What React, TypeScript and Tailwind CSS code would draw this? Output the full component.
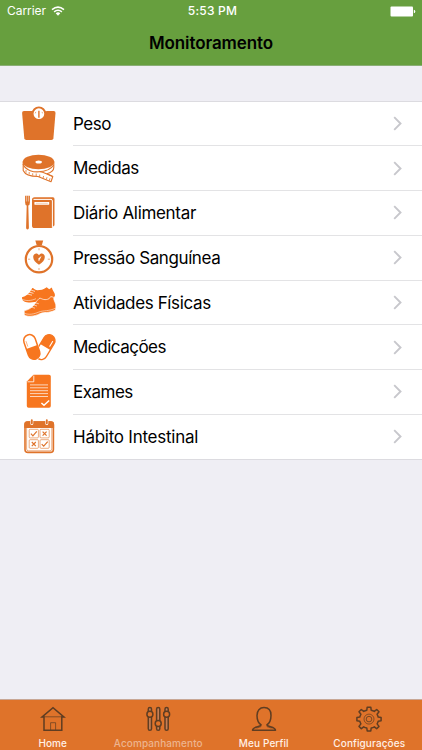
import React from "react";

const ORANGE = "#df732a";
const BRIGHT = "#f7761f";

interface IMenuItem {
    name: string;
    tracking: string;
    icon: React.ReactNode;
}

const ScaleIcon = () => (
    <svg width="36" height="36" viewBox="0 0 36 36">
        <path d="M3 5.1H32.7Q34.6 5.1 34.5 7L32.4 32.3Q32.2 34.1 30.4 34.1H5.3Q3.5 34.1 3.3 32.3L1.1 7Q1 5.1 3 5.1Z" fill={ORANGE} />
        <path d="M10.3 4.8V3.3H25.5V5.3Z" fill="white" />
        <circle cx="17.9" cy="7.7" r="6.3" fill="white" stroke={ORANGE} strokeWidth="1.9" />
        <path d="M17.9 4.7V11.7" stroke={ORANGE} strokeWidth="1.4" />
        <path d="M14.2 7.4L14.8 5.9M21.6 7.4L21 5.9" stroke={ORANGE} strokeWidth="0.6" />
    </svg>
);

const TapeIcon = () => (
    <svg width="36" height="36" viewBox="0 0 36 36">
        <path d="M2.2 10.5V19.5C4 23.5 10 25.5 17 25.5L30 30.7L31.8 25.5L26 22.8C30 21.5 32.8 19 32.8 16.5V10.5Z" fill="white" stroke={ORANGE} strokeWidth="1.1" strokeLinejoin="round" />
        <ellipse cx="17.5" cy="11" rx="15.7" ry="7.3" fill={ORANGE} />
        <path d="M2 13C5 20 13 21.2 18 20.8C22 20.4 24 22.5 31.7 25.4M17 20.8C24 20.5 30 18.5 32.7 14" fill="none" stroke={ORANGE} strokeWidth="1.1" />
        <path d="M5 21.7V19M8.2 23.3V21M11.7 24.5V22.3M15.2 25V22.5M18.7 26V23.6M22 27.2L22.6 25M25.3 28.5L26 26.2M28.3 29.7L29 27.3" stroke={ORANGE} strokeWidth="0.8" />
        <ellipse cx="17.7" cy="11" rx="3.2" ry="1.5" fill="white" />
    </svg>
);

const FoodDiaryIcon = () => (
    <svg width="36" height="36" viewBox="0 0 36 36">
        <path d="M4.1 0.7V7.5Q4.1 10 5.7 10.5L5.1 32.7Q5.1 34.5 6.5 34.5T7.9 32.7L7.3 10.5Q8.9 10 8.9 7.5V0.7" fill={ORANGE} />
        <path d="M5.6 0.3V6.5M7.4 0.3V6.5" stroke="white" strokeWidth="0.5" />
        <path d="M13.6 2.2H32Q33.5 2.2 33.5 4V30.2L30.5 33.1H13.6Q11 33.1 11 30.5V4.8Q11 2.2 13.6 2.2Z" fill={ORANGE} />
        <path d="M12.5 4.4H30Q31.4 4.4 31.4 6V32.2" fill="none" stroke="white" strokeWidth="1" />
        <rect x="13.4" y="6.9" width="14.8" height="2.8" rx="0.4" fill="white" />
        <path d="M14.8 8.3H26.8" stroke={ORANGE} strokeWidth="0.35" />
    </svg>
);

const PressureIcon = () => (
    <svg width="36" height="36" viewBox="0 0 36 36">
        <path d="M14.3 0.5H22.2L20.8 5.2H15.7Z" fill={ORANGE} />
        <circle cx="18" cy="19.2" r="13.2" fill="white" stroke={ORANGE} strokeWidth="2.2" />
        <path d="M18 8.2V10.3M18 28V30.1M7 19.2H9.2M26.8 19.2H29" stroke={ORANGE} strokeWidth="0.6" />
        <path d="M18 24.8C14.5 22.4 12.2 20.3 12.2 17C12.2 13.3 16.2 12.2 18 15.2C19.8 12.2 23.8 13.3 23.8 17C23.8 20.3 21.5 22.4 18 24.8Z" fill={ORANGE} />
        <path d="M20.6 15.8L17.4 18.6Q16.5 20.3 17.7 20.8Q18.9 20.9 19 19.3Z" fill="white" />
        <circle cx="17.9" cy="19.7" r="0.5" fill={ORANGE} />
    </svg>
);

const ShoesIcon = () => (
    <svg width="36" height="36" viewBox="0 0 36 36">
        <path d="M1 12.2C5 11.4 8.4 8.5 11 3.4C12.2 2.2 13.2 5.3 16.3 5.2C20 5.1 22 4.8 25.7 2.2L28.2 4.3L30.8 2.5C31.2 5.5 34 7.5 34 10.3L32 15L9 17.6C5 17.5 0.5 16.5 1 12.2Z" fill={BRIGHT} />
        <path d="M1 14.2C5 16.2 10 15.9 15 13.7" fill="none" stroke="white" strokeWidth="0.5" />
        <path d="M8 7L12.5 8.3M9.8 5L14 6.4M6.2 9L11 10.2" stroke="white" strokeWidth="0.7" />
        <path d="M3.2 25.6C9 24.8 13.4 20.5 15.2 16.6C17 15.3 17.4 13.5 19 13.1C21.2 13.9 24 15.8 28.2 13.6L29.7 11.6L32.6 12.2C32.3 15.5 35.6 18.4 34.9 22.4L34.5 25C28 28.5 23 26.7 19 28.7C13 31.7 6 32.2 3.2 29.8Z" fill={BRIGHT} stroke="white" strokeWidth="0.7" />
        <path d="M3.3 28.2C8 30.2 13 29.1 17.7 27.1C22 25.2 28.5 26.5 34.7 23" fill="none" stroke="white" strokeWidth="0.5" />
        <path d="M12.1 19.8L16 21M14 17.7L17.8 18.8M9.7 21.8L14 23.2" stroke="white" strokeWidth="0.6" />
    </svg>
);

const PillsIcon = () => (
    <svg width="36" height="36" viewBox="0 0 36 36">
        <g transform="rotate(31 24.2 17.1)">
            <rect x="18.3" y="3.6" width="11.8" height="27" rx="5.9" fill="white" stroke={BRIGHT} strokeWidth="1.3" />
            <path d="M18.3 17V9.5A5.9 5.9 0 0 1 30.1 9.5V17Z" fill={BRIGHT} />
            <path d="M27.7 8.5V14" stroke="white" strokeWidth="1.1" strokeLinecap="round" />
        </g>
        <g transform="rotate(-19 10.7 17)">
            <rect x="3.9" y="3.4" width="13.6" height="27.2" rx="6.8" fill="white" />
            <rect x="4.9" y="4.3" width="11.8" height="25.4" rx="5.9" fill="white" stroke={BRIGHT} strokeWidth="1.5" />
            <path d="M4.9 17H16.7V23.8A5.9 5.9 0 0 1 4.9 23.8Z" fill={BRIGHT} />
            <path d="M7.2 10V15" stroke={BRIGHT} strokeWidth="0.5" strokeLinecap="round" />
        </g>
    </svg>
);

const ExamIcon = () => (
    <svg width="36" height="36" viewBox="0 0 36 36">
        <path d="M12.5 0.8H28Q29.8 0.8 29.8 2.6V32Q29.8 33.8 28 33.8H7.6Q5.8 33.8 5.8 32V7.5Z" fill={BRIGHT} />
        <path d="M12.8 1.6V7.8H6.5" fill="none" stroke="white" strokeWidth="0.8" />
        <path d="M9 10.9H27M9 13.8H27M9 16.7H27M9 19.6H27M9 22.5H27" stroke="white" strokeWidth="0.7" />
        <path d="M20.4 29L23 31.3L28.2 26.5" fill="none" stroke="white" strokeWidth="1.5" />
    </svg>
);

const CalendarIcon = () => (
    <svg width="36" height="36" viewBox="0 0 36 36">
        <rect x="4" y="3" width="28.4" height="30.4" rx="3" fill="white" stroke={ORANGE} strokeWidth="1.6" />
        <path d="M3.3 9V5Q3.3 2.3 6 2.3H30.4Q33.1 2.3 33.1 5V9Z" fill={ORANGE} />
        <path d="M5.6 9V30Q5.6 31.8 7.4 31.8H29Q30.8 31.8 30.8 30V9" fill="none" stroke={ORANGE} strokeWidth="0.6" />
        <path d="M10.8 1.2V4.4M25.8 1.2V4.4" stroke="white" strokeWidth="3" strokeLinecap="round" />
        <path d="M10.8 1.2V4.2M25.8 1.2V4.2" stroke={ORANGE} strokeWidth="1.9" strokeLinecap="round" />
        <g fill="none" stroke={ORANGE} strokeWidth="0.6">
            <rect x="8.2" y="10.3" width="9.2" height="8.6" rx="1" />
            <rect x="19" y="10.3" width="9.2" height="8.6" rx="1" />
            <rect x="8.2" y="20.7" width="9.2" height="8.6" rx="1" />
            <rect x="19" y="20.7" width="9.2" height="8.6" rx="1" />
        </g>
        <g fill="none" stroke={ORANGE} strokeWidth="1.2">
            <path d="M9.9 14.7L11.9 16.8L15.8 12.3M20.7 25.1L22.7 27.2L26.7 22.7" />
            <path d="M21.6 12.6L25.6 16.7M25.6 12.6L21.6 16.7M10.8 23L14.8 27.1M14.8 23L10.8 27.1" />
        </g>
    </svg>
);

const HomeIcon = () => (
    <svg width="26" height="26" viewBox="0 0 26 26" fill="none" stroke="#5f3d22">
        <path d="M1.9 11.1L13 1.8L24.1 11.1H21.8V24.2H4V11.1Z" strokeWidth="1.5" />
        <path d="M4 10.8H22M10.6 24V16.7H15.6V24" strokeWidth="0.7" />
    </svg>
);

const SlidersIcon = () => (
    <svg width="26" height="26" viewBox="0 0 26 26" fill="#c77f55" stroke="#5f3d22" strokeWidth="1.5">
        <rect x="3.3" y="1.5" width="3.2" height="22.8" rx="1.6" />
        <rect x="11.6" y="1.5" width="3.2" height="22.8" rx="1.6" />
        <rect x="20" y="1.5" width="3.2" height="22.8" rx="1.6" />
        <g fill={ORANGE}>
            <circle cx="4.9" cy="8.3" r="3" />
            <circle cx="13.2" cy="17.5" r="3" />
            <circle cx="21.6" cy="8.3" r="3" />
        </g>
    </svg>
);

const ProfileIcon = () => (
    <svg width="26" height="26" viewBox="0 0 26 26" fill="none" stroke="#5f3d22" strokeWidth="1.5">
        <path d="M10.1 18.9C7.4 17 6 13.2 6 9.4C6 4.5 8.7 1.6 13 1.6S20 4.5 20 9.4C20 13.2 18.6 17 15.9 18.9C16.7 21 24.5 20.6 24.5 24.3H1.5C1.5 20.6 9.3 21 10.1 18.9Z" strokeLinejoin="round" />
        <path d="M5.5 22.2Q8.8 21.2 10.3 20.5M20.5 22.2Q17.2 21.2 15.7 20.5" strokeWidth="0.6" />
    </svg>
);

const GearIcon = () => (
    <svg width="26" height="26" viewBox="0 0 26 26" fill="none" stroke="#5f3d22">
        <path
            d="M11.2 1.2H14.8L15.2 4.2Q17 4.6 18.3 5.4L20.7 3.5L23 5.8L21.1 8.3Q21.9 9.6 22.2 11L25.1 11.4V14.8L22.2 15.2Q21.9 16.6 21.1 17.9L23 20.4L20.7 22.7L18.3 20.8Q17 21.6 15.2 22L14.8 24.9H11.2L10.8 22Q9.1 21.6 7.7 20.8L5.3 22.7L3 20.4L4.9 17.9Q4.1 16.6 3.8 15.2L0.9 14.8V11.4L3.8 11Q4.1 9.6 4.9 8.3L3 5.8L5.3 3.5L7.7 5.4Q9.1 4.6 10.8 4.2Z"
            strokeWidth="1.5"
            strokeLinejoin="round"
        />
        <circle cx="13" cy="13.1" r="5" strokeWidth="0.7" />
        <circle cx="13" cy="13.1" r="2.8" strokeWidth="0.8" />
    </svg>
);

const menuItems: IMenuItem[] = [
    { name: "Peso", tracking: "tracking-[-0.5px]", icon: <ScaleIcon /> },
    { name: "Medidas", tracking: "tracking-[-0.4px]", icon: <TapeIcon /> },
    { name: "Diário Alimentar", tracking: "tracking-[-0.32px]", icon: <FoodDiaryIcon /> },
    { name: "Pressão Sanguínea", tracking: "tracking-[-0.4px]", icon: <PressureIcon /> },
    { name: "Atividades Físicas", tracking: "tracking-[-0.37px]", icon: <ShoesIcon /> },
    { name: "Medicações", tracking: "tracking-[-0.5px]", icon: <PillsIcon /> },
    { name: "Exames", tracking: "tracking-[-0.5px]", icon: <ExamIcon /> },
    { name: "Hábito Intestinal", tracking: "tracking-[-0.25px]", icon: <CalendarIcon /> },
];

const tabs = [
    { name: "Home", color: "text-[#fff0e6]", icon: <HomeIcon /> },
    { name: "Acompanhamento", color: "text-[#edb48e]", icon: <SlidersIcon /> },
    { name: "Meu Perfil", color: "text-[#fff0e6]", icon: <ProfileIcon /> },
    { name: "Configurações", color: "text-[#fff0e6]", icon: <GearIcon /> },
];

const Header = () => (
    <header className="h-[66px] shrink-0 border-b border-[#8aae75] bg-[#679f3e]">
        <div className="grid h-[22px] grid-cols-3 items-center pl-[7px] pr-[6px] text-[12px] text-white">
            <div className="flex items-center gap-[5px]">
                <span className="tracking-[-0.05px]">Carrier</span>
                <svg width="14" height="10" viewBox="0 0 14 10" fill="none" stroke="white" strokeWidth="1.5">
                    <path d="M1 3.6Q7 -1.4 13 3.6M3.1 5.8Q7 2.6 10.9 5.8" />
                    <path d="M4.7 7.3Q7 5.4 9.3 7.3L7 9.7Z" fill="white" stroke="none" />
                </svg>
            </div>
            <span className="pl-[2px] text-center font-medium tracking-[0.2px]">5:53 PM</span>
            <div className="flex justify-end">
                <svg width="26" height="11" viewBox="0 0 26 11" fill="white">
                    <rect x="0.5" y="0.5" width="22.5" height="10" rx="1" />
                    <path d="M23.8 3.7Q25.3 4 25.3 5.5T23.8 7.3Z" />
                </svg>
            </div>
        </div>
        <h1 className="text-center text-[17px] font-semibold leading-[43px] tracking-[-0.1px] text-black">Monitoramento</h1>
    </header>
);

const MenuRow: React.FC<IMenuItem & { last: boolean }> = ({ name, tracking, icon, last }) => (
    <li className={`flex pl-[21px] ${last ? "h-[43.75px]" : "h-[44.75px]"}`}>
        <div className="flex w-[52px] shrink-0 items-center">{icon}</div>
        <div className={`flex grow items-center justify-between pr-[20px] ${last ? "" : "border-b border-[#e3e3e5]"}`}>
            <span className={`pt-[2px] text-[17px] text-black ${tracking}`}>{name}</span>
            <svg width="9" height="15" viewBox="0 0 9 15" fill="none" stroke="#c7c7cc" strokeWidth="1.9">
                <path d="M1.2 1.2L7.5 7.5L1.2 13.8" />
            </svg>
        </div>
    </li>
);

const App = () => (
    <div className="flex h-[750px] w-[422px] flex-col overflow-hidden bg-[#efeef4] font-['Inter',sans-serif]">
        <Header />
        <main className="grow pt-[34.5px]">
            <ul className="border-y border-[#dcdbe0] bg-white">
                {menuItems.map((item, index) => (
                    <MenuRow key={item.name} {...item} last={index === menuItems.length - 1} />
                ))}
            </ul>
        </main>
        <nav className="grid h-[51px] shrink-0 grid-cols-4 border-t border-[#c8a795] bg-[#df732a]">
            {tabs.map((tab) => (
                <div key={tab.name} className="flex flex-col items-center pt-[6px]">
                    {tab.icon}
                    <span className={`mt-[4px] text-[10px] font-medium leading-[14px] tracking-[0.1px] ${tab.color}`}>{tab.name}</span>
                </div>
            ))}
        </nav>
    </div>
);

export default App;
